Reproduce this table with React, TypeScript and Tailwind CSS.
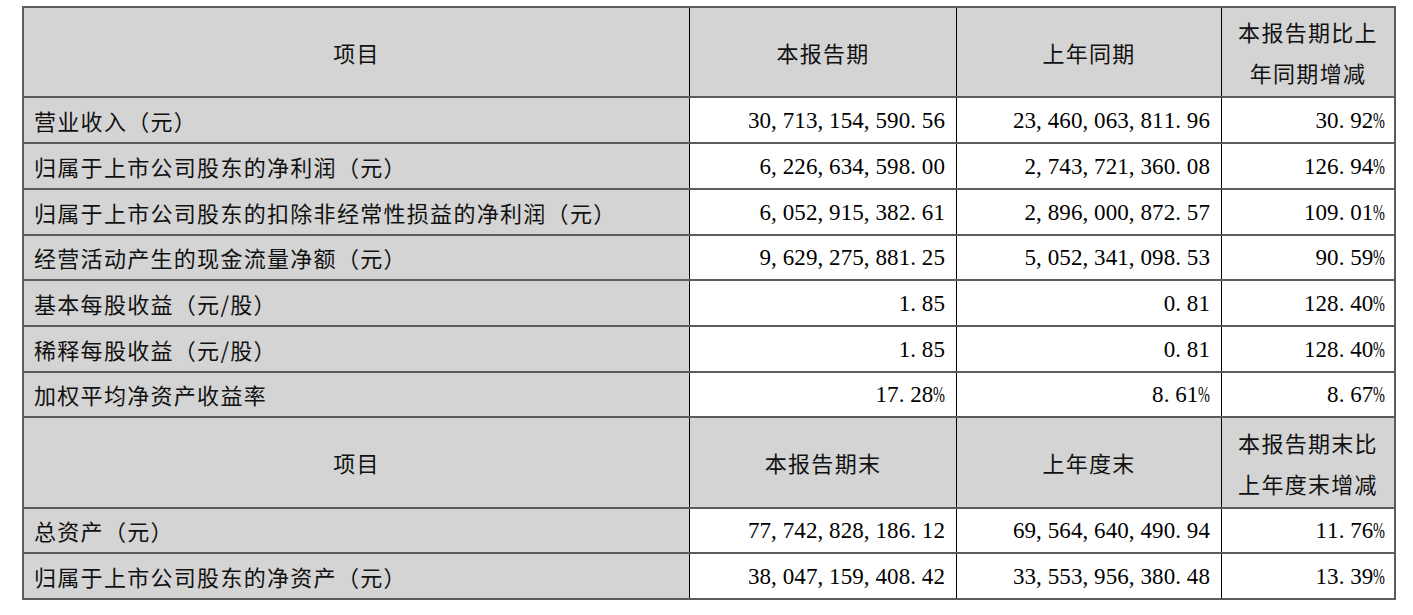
import React from "react";

const CJK = "font-['Noto_Sans_CJK_SC',sans-serif]";
const cols = "grid grid-cols-[666px_267px_265px_172px]";

function Num({ v }: { v: string }) {
  return (
    <span className="font-['Liberation_Serif',serif] text-[23px] leading-none whitespace-nowrap text-black">
      {v.split("").map((c, i) =>
        c === "%" ? (
          <span key={i} className="inline-block w-[11.6px] text-left">
            <span className="inline-block origin-left scale-x-[0.62]">%</span>
          </span>
        ) : c === "," || c === "." ? (
          <span key={i} className="inline-block w-[11.6px] text-left">
            {c}
          </span>
        ) : (
          <span key={i} className="inline-block w-[11.6px] text-center">
            {c}
          </span>
        )
      )}
    </span>
  );
}

type Row = { label: string; a: string; b: string; c: string; h: string };

function DataRow({ r }: { r: Row }) {
  return (
    <div className={`${cols} ${r.h} border-b-2 border-[#5c5c5c]`}>
      <div className={`bg-[#d4d4d4] border-r border-black flex items-center pl-[10px] ${CJK} text-[22px] tracking-[1.3px] text-[#111] whitespace-nowrap`}>
        {r.label}
      </div>
      <div className="bg-white border-r border-black flex items-center justify-end pr-[11px]">
        <Num v={r.a} />
      </div>
      <div className="bg-white border-r border-black flex items-center justify-end pr-[11px]">
        <Num v={r.b} />
      </div>
      <div className="bg-white flex items-center justify-end pr-[9px]">
        <Num v={r.c} />
      </div>
    </div>
  );
}

function HeaderRow({ h, a, b, c1, c2 }: { h: string; a: string; b: string; c1: string; c2: string }) {
  const cell = `bg-[#d4d4d4] flex items-center justify-center ${CJK} text-[22px] tracking-[1.3px] text-[#111]`;
  return (
    <div className={`${cols} ${h} border-b-2 border-[#5c5c5c]`}>
      <div className={`${cell} border-r border-black`}>项目</div>
      <div className={`${cell} border-r border-black`}>{a}</div>
      <div className={`${cell} border-r border-black`}>{b}</div>
      <div className={`${cell} flex-col leading-[41px]`}>
        <span>{c1}</span>
        <span>{c2}</span>
      </div>
    </div>
  );
}

const rows1: Row[] = [
  { label: "营业收入（元）", a: "30,713,154,590.56", b: "23,460,063,811.96", c: "30.92%", h: "h-[46px]" },
  { label: "归属于上市公司股东的净利润（元）", a: "6,226,634,598.00", b: "2,743,721,360.08", c: "126.94%", h: "h-[46px]" },
  { label: "归属于上市公司股东的扣除非经常性损益的净利润（元）", a: "6,052,915,382.61", b: "2,896,000,872.57", c: "109.01%", h: "h-[46px]" },
  { label: "经营活动产生的现金流量净额（元）", a: "9,629,275,881.25", b: "5,052,341,098.53", c: "90.59%", h: "h-[45px]" },
  { label: "基本每股收益（元/股）", a: "1.85", b: "0.81", c: "128.40%", h: "h-[46px]" },
  { label: "稀释每股收益（元/股）", a: "1.85", b: "0.81", c: "128.40%", h: "h-[46px]" },
  { label: "加权平均净资产收益率", a: "17.28%", b: "8.61%", c: "8.67%", h: "h-[45px]" },
];

const rows2: Row[] = [
  { label: "总资产（元）", a: "77,742,828,186.12", b: "69,564,640,490.94", c: "11.76%", h: "h-[45px]" },
  { label: "归属于上市公司股东的净资产（元）", a: "38,047,159,408.42", b: "33,553,956,380.48", c: "13.39%", h: "h-[46px]" },
];

export default function App() {
  return (
    <div className="w-[1413px] h-[615px] bg-white pt-[6px] pl-[22px] overflow-hidden">
      <div className="w-[1374px] border-t-2 border-l-2 border-r-2 border-[#5c5c5c]">
        <HeaderRow h="h-[90px]" a="本报告期" b="上年同期" c1="本报告期比上" c2="年同期增减" />
        {rows1.map((r, i) => (
          <DataRow key={i} r={r} />
        ))}
        <HeaderRow h="h-[91px]" a="本报告期末" b="上年度末" c1="本报告期末比" c2="上年度末增减" />
        {rows2.map((r, i) => (
          <DataRow key={i} r={r} />
        ))}
      </div>
    </div>
  );
}
